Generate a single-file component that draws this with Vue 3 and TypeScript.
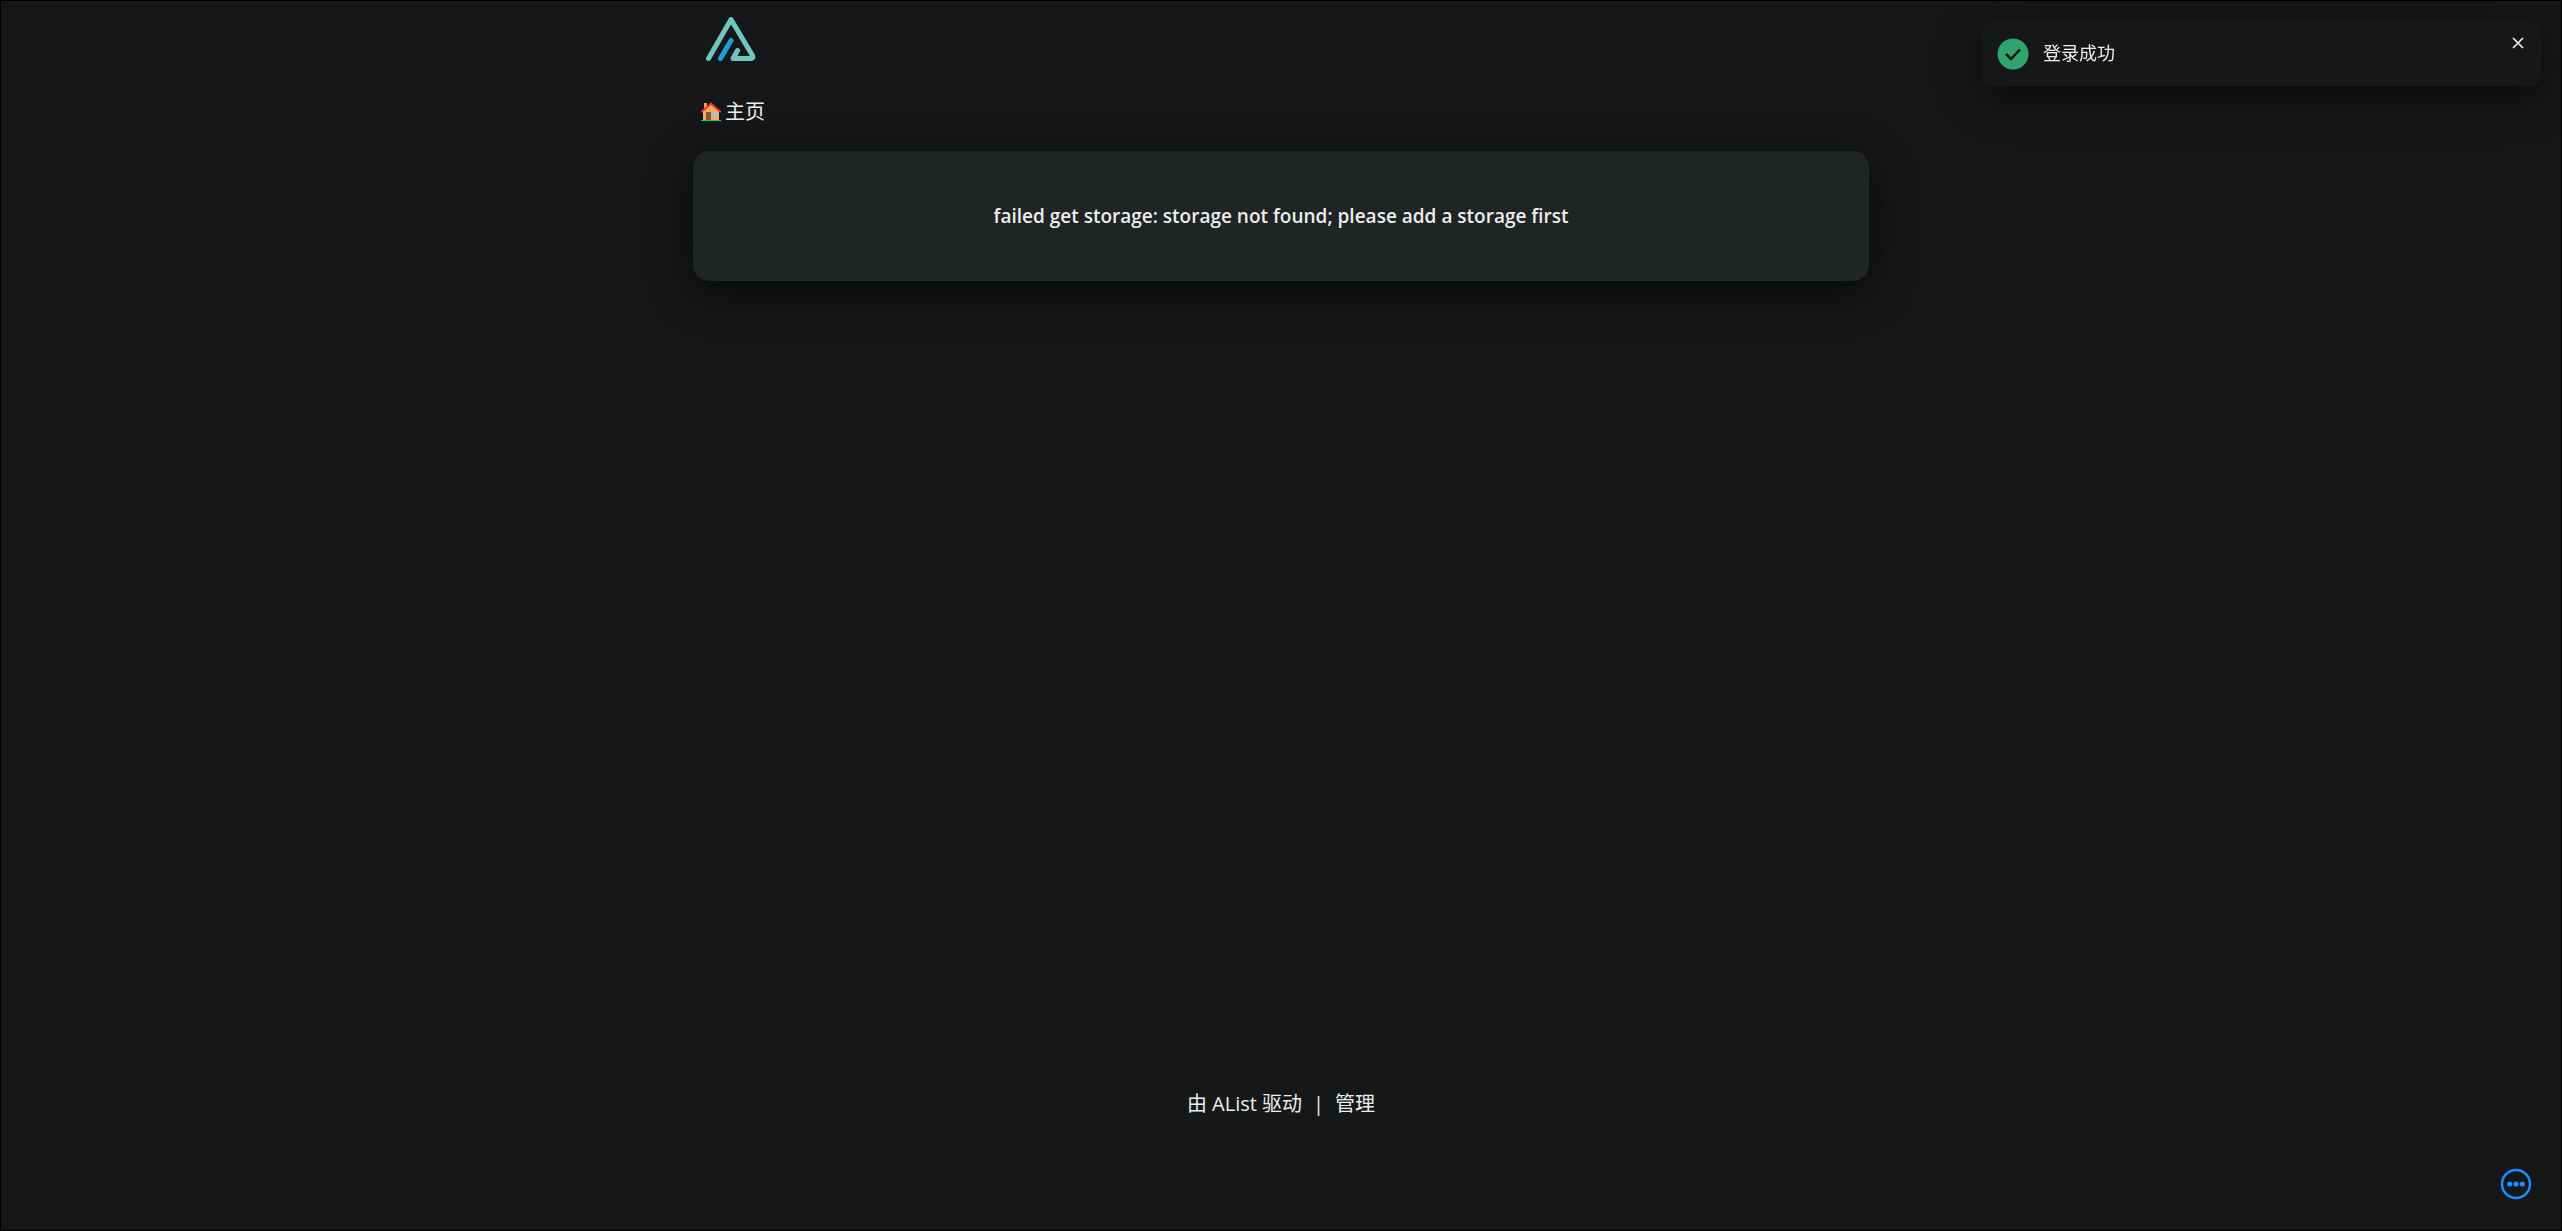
<script setup lang="ts">
import { ref } from 'vue'

const message = 'failed get storage: storage not found; please add a storage first'
const toastOpen = ref(true)
</script>

<template>
  <div class="page">
    <header class="header">
      <a class="logo" href="#" aria-label="AList">
        <svg viewBox="0 0 52 46" width="52" height="46" fill="none" stroke-width="5" stroke-linecap="round" stroke-linejoin="round">
          <path d="M3.5 42.5 26 3.5 47.5 39.5Q49 42.5 46 42.5H28L32.5 34.5" stroke="#70c6be" />
          <path d="M15.5 42.5 26 24.5" stroke="#1ba0d8" />
        </svg>
      </a>
    </header>

    <main class="body">
      <nav class="crumbs">
        <a class="crumb" href="#">
          <svg viewBox="0 0 20 20" width="20" height="20" aria-hidden="true">
            <path d="M3 1h3v6H3z" fill="#f0a060" />
            <path d="M2 9 10 2l8 7v9H2z" fill="#f3ad61" />
            <path d="M5 10h5v8H5z" fill="#8c5543" />
            <path d="M12 10h4v4h-4z" fill="#83cbff" />
            <path d="m1 9.500 9-8 9 8" fill="none" stroke="#f8312f" stroke-width="2" stroke-linecap="round" />
            <path d="M0 18h20v1H0z" fill="#00d26a" />
          </svg>
          <span>主页</span>
        </a>
      </nav>
      <section class="card">
        <h2 class="message">{{ message }}</h2>
      </section>
    </main>

    <footer class="footer">
      <a href="#">由 AList 驱动</a>
      <span>|</span>
      <a href="#">管理</a>
    </footer>

    <div v-if="toastOpen" class="toast" role="status">
      <svg class="tick" viewBox="0 0 32 32" width="32" height="32" aria-hidden="true">
        <circle cx="16" cy="16" r="15.5" fill="#30a46c" />
        <path d="m9 16 5 5 9-9.500" fill="none" stroke="#151718" stroke-width="2.500" />
      </svg>
      <span class="toast-text">登录成功</span>
      <button class="close" type="button" aria-label="关闭" @click="toastOpen = false">
        <svg viewBox="0 0 12 12" width="12" height="12"><path d="m1 1 10 10M11 1 1 11" stroke="#ecedee" stroke-width="1.700" /></svg>
      </button>
    </div>

    <button class="more" type="button" aria-label="更多">
      <svg viewBox="0 0 32 32" width="32" height="32" fill="#1890ff">
        <circle cx="16" cy="16" r="14" fill="none" stroke="#1890ff" stroke-width="2.500" />
        <circle cx="9.700" cy="16" r="2.600" />
        <circle cx="16" cy="16" r="2.600" />
        <circle cx="22.300" cy="16" r="2.600" />
      </svg>
    </button>
  </div>
</template>

<style>
body {
  background: #151718;
}
</style>

<style scoped>
.page {
  box-sizing: border-box;
  min-height: 100vh;
  display: flex;
  flex-direction: column;
  align-items: center;
  border: 1px solid #000;
  background: #151718;
  color: #ecedee;
  font: 20px/30px "Open Sans", "Noto Sans CJK SC", sans-serif;
}

a {
  color: inherit;
  text-decoration: none;
}

button {
  display: flex;
  padding: 0;
  border: 0;
  background: none;
  cursor: pointer;
}

svg {
  display: block;
}

.header,
.body {
  box-sizing: border-box;
  width: 98%;
  max-width: 1176px;
}

.header {
  display: flex;
  padding: 15px 12px 0;
}

.body {
  flex: 1;
}

.crumbs {
  display: flex;
  padding: 35px 8px 24px;
}

.crumb {
  display: flex;
  align-items: center;
  gap: 4px;
}

.card {
  box-sizing: border-box;
  padding: 50px 20px;
  border-radius: 16px;
  background: #202425;
  box-shadow: 0 10px 38px -10px #000000a0, 0 10px 50px #00000050;
}

.message {
  margin: 0;
  font-size: 19px;
  line-height: 30px;
  font-weight: 600;
  text-align: center;
}

.footer {
  display: flex;
  gap: 11px;
  padding-bottom: 111px;
}

.toast {
  position: fixed;
  top: 21px;
  right: 21px;
  box-sizing: border-box;
  width: 560px;
  display: flex;
  align-items: center;
  padding: 16px;
  border-radius: 10px;
  background: #151718;
  box-shadow: 0 10px 38px -10px #000000a0, 0 10px 50px #00000050;
}

.toast-text {
  margin-left: 14px;
  font-size: 18px;
  line-height: 33px;
}

.close {
  position: absolute;
  top: 16px;
  right: 17px;
}

.more {
  position: fixed;
  right: 30px;
  bottom: 31px;
}
</style>
